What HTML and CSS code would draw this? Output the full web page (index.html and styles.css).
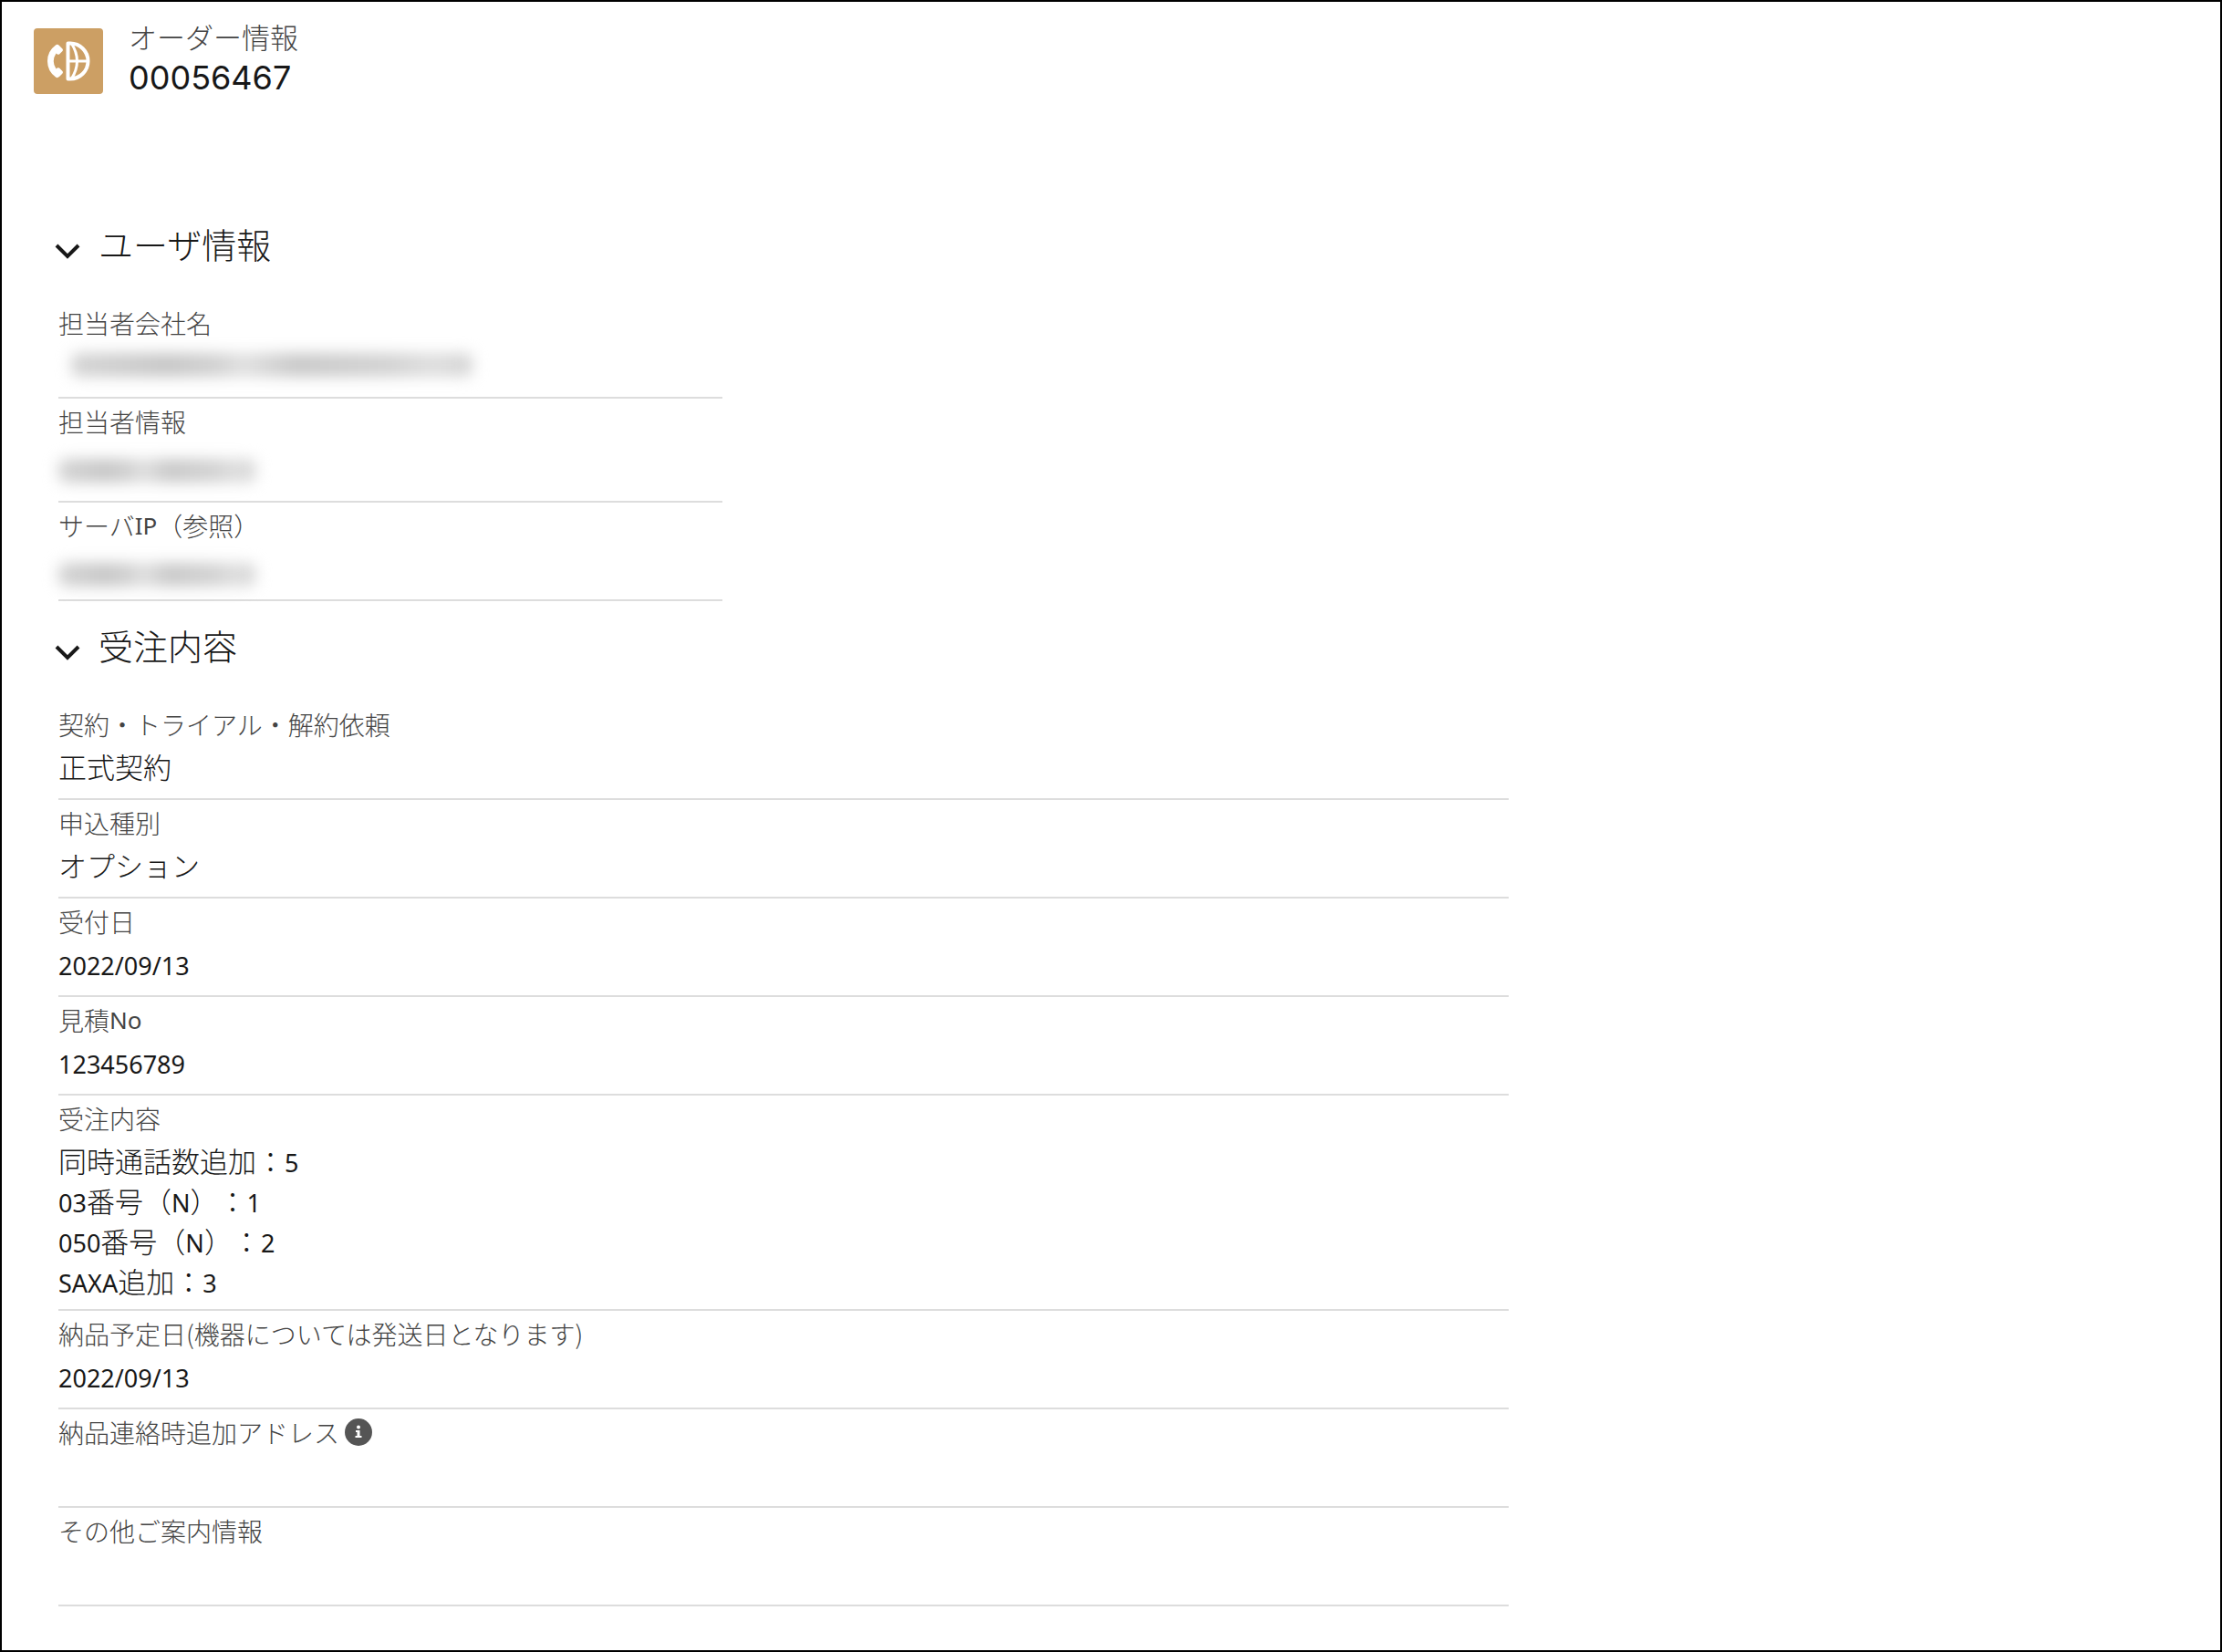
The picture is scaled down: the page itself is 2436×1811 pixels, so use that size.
FILE: index.html
```html
<!DOCTYPE html>
<html lang="ja">
<head>
    <meta charset="UTF-8">
    <meta name="viewport" content="width=device-width, initial-scale=1.0">
    <title>オーダー情報</title>
    <link rel="stylesheet" href="styles.css">
</head>
<body>
    <header class="page-header">
        <svg class="app-icon" viewBox="0 0 76 72" aria-hidden="true">
            <rect width="76" height="72" rx="4" fill="#cc9f64"/>
            <!-- handset -->
            <path d="M24 18.500 Q26 17 28 19 L31.500 22.500 Q32.500 24 31.500 25 L28 28.500 Q26.500 29.500 24.500 27.500 Q19 36 24.500 44.500 Q26.500 42.500 28 43.500 L31.500 47 Q32.500 48 31.500 49.500 L28 53 Q26 55 24 53.500 Q15 47 15 36 Q15 25 24 18.500 Z" fill="#fff"/>
            <!-- half globe -->
            <g fill="none" stroke="#fff" stroke-width="3">
                <path d="M37.500 16.500 H40 A19.500 19.500 0 0 1 40 55.500 H37.500 Z" stroke-width="4" stroke-linejoin="round"/>
                <path d="M38 36 H60"/>
                <path d="M41 16 Q54 36 41 56"/>
            </g>
        </svg>
        <div>
            <p class="object-name">オーダー情報</p>
            <h1 class="record-name">00056467</h1>
        </div>
    </header>

    <main class="container">
        <section class="section section-half">
            <h2>
                <button type="button" class="section-toggle" aria-expanded="true">
                    <svg class="chevron" viewBox="0 0 28 36" aria-hidden="true"><path d="M2 20 L14 32 L26 20"/></svg>
                    ユーザ情報
                </button>
            </h2>
            <dl>
                <div class="field">
                    <dt>担当者会社名</dt>
                    <dd><span class="masked masked-long"></span></dd>
                </div>
                <div class="field field-tall">
                    <dt>担当者情報</dt>
                    <dd><span class="masked"></span></dd>
                </div>
                <div class="field">
                    <dt>サーバ<span class="latin">IP</span>（参照）</dt>
                    <dd><span class="masked"></span></dd>
                </div>
            </dl>
        </section>

        <section class="section">
            <h2>
                <button type="button" class="section-toggle" aria-expanded="true">
                    <svg class="chevron" viewBox="0 0 28 36" aria-hidden="true"><path d="M2 20 L14 32 L26 20"/></svg>
                    受注内容
                </button>
            </h2>
            <dl>
                <div class="field">
                    <dt>契約・トライアル・解約依頼</dt>
                    <dd>正式契約</dd>
                </div>
                <div class="field">
                    <dt>申込種別</dt>
                    <dd>オプション</dd>
                </div>
                <div class="field">
                    <dt>受付日</dt>
                    <dd><span class="latin">2022/09/13</span></dd>
                </div>
                <div class="field">
                    <dt>見積<span class="latin">No</span></dt>
                    <dd><span class="latin">123456789</span></dd>
                </div>
                <div class="field">
                    <dt>受注内容</dt>
                    <dd>同時通話数追加：<span class="latin">5</span></dd>
                    <dd><span class="latin">03</span>番号（<span class="latin">N</span>）：<span class="latin">1</span></dd>
                    <dd><span class="latin">050</span>番号（<span class="latin">N</span>）：<span class="latin">2</span></dd>
                    <dd><span class="latin">SAXA</span>追加：<span class="latin">3</span></dd>
                </div>
                <div class="field">
                    <dt>納品予定日(機器については発送日となります)</dt>
                    <dd><span class="latin">2022/09/13</span></dd>
                </div>
                <div class="field">
                    <dt>納品連絡時追加アドレス<button type="button" class="info" aria-label="ヘルプ"><svg viewBox="0 0 30 30" aria-hidden="true"><circle cx="15" cy="15" r="15" fill="#555"/><circle cx="15" cy="9.500" r="2" fill="#fff"/><path d="M12 13 H16.500 V19 H18.500 V21 H11.500 V19 H13.500 V15 H12 Z" fill="#fff"/></svg></button></dt>
                    <dd></dd>
                </div>
                <div class="field">
                    <dt>その他ご案内情報</dt>
                    <dd></dd>
                </div>
            </dl>
        </section>
    </main>

    <script>
        // Open and close the sections
        document.querySelectorAll('.section-toggle').forEach(button => {
            button.addEventListener('click', () => {
                const list = button.closest('.section').querySelector('dl');
                list.hidden = !list.hidden;
                button.setAttribute('aria-expanded', String(!list.hidden));
            });
        });
    </script>
</body>
</html>
```
FILE: styles.css
```css
* {
    margin: 0;
    padding: 0;
    box-sizing: border-box;
}

body {
    min-height: 100vh;
    border: 2px solid #000;
    background: #fff;
    color: #181818;
    font-family: 'Noto Sans CJK JP', sans-serif;
    font-weight: 300;
    text-spacing-trim: space-all;
}

.page-header {
    display: flex;
    align-items: center;
    gap: 28px;
    padding: 16px 35px 0;
}

.app-icon {
    width: 76px;
    height: 72px;
    margin-top: 8px;
}

.object-name {
    font-size: 31px;
    line-height: 44px;
    color: #444;
}

.record-name {
    font-family: Inter, sans-serif;
    font-size: 36px;
    font-weight: 400;
    line-height: 46px;
}

.container {
    padding: 111px 62px 40px;
}

.section {
    max-width: 1590px;
    padding-top: 21px;
}

.section-half {
    max-width: 728px;
}

.section h2 {
    margin: 0 0 35px -4px;
    font-size: 38px;
    line-height: 54px;
}

.section-toggle {
    display: flex;
    align-items: center;
    gap: 20px;
    border: none;
    background: none;
    color: inherit;
    font-family: inherit;
    font-size: 38px;
    font-weight: 300;
    line-height: 54px;
    cursor: pointer;
}

.chevron {
    width: 28px;
    height: 36px;
    fill: none;
    stroke: #181818;
    stroke-width: 4;
}

.field {
    min-height: 108px;
    padding: 6px 0 9px;
    border-bottom: 2px solid #ddd;
}

.field-tall {
    min-height: 114px;
}

.field dt {
    display: flex;
    align-items: center;
    margin-bottom: 5px;
    font-size: 28px;
    line-height: 38px;
    color: #444;
}

.field dd {
    font-size: 31px;
    line-height: 44px;
}

.latin {
    font-family: 'Noto Sans', sans-serif;
    font-size: 26px;
    font-weight: 400;
    line-height: 1;
}

.field dd .latin {
    font-size: 27px;
}

.info {
    width: 30px;
    height: 30px;
    margin-left: 6px;
    border: none;
    background: none;
    cursor: pointer;
}

.info svg {
    display: block;
}

/* Hidden personal data */
.masked {
    display: block;
    width: 216px;
    height: 26px;
    margin-top: 22px;
    border-radius: 8px;
    background: linear-gradient(90deg, #d4d4d4, #c6c6c6 24%, #d0d0d0 36%, #e0e0e0 43%, #c8c8c8 56%, #d2d2d2 80%, #dedede 90%, #d4d4d4);
    filter: blur(8px);
}

.masked-long {
    width: 440px;
    margin: 14px 0 0 14px;
}

@media (max-width: 768px) {
    .container {
        padding: 48px 24px;
    }
}
```
